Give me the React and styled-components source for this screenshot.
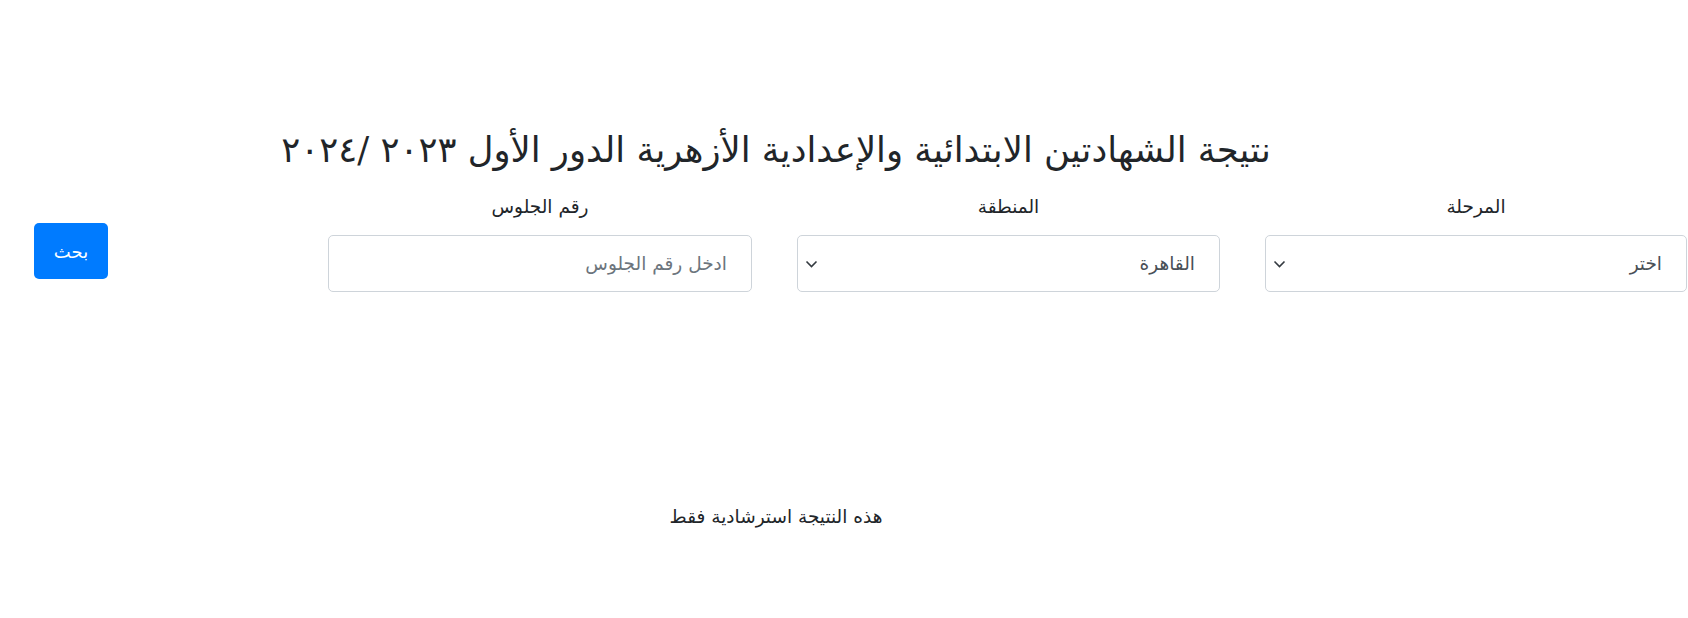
import React from "react";
import styled, { createGlobalStyle } from "styled-components";

const Global = createGlobalStyle`
  html, body { margin: 0; padding: 0; background: #fff; }
  body {
    direction: rtl;
    font-family: "DejaVu Sans", "Noto Sans", sans-serif;
    color: #212529;
    overflow: hidden;
  }
`;

const Page = styled.div`
  width: 1688px;
  height: 618px;
  display: flex;
  flex-direction: column;
`;

const Heading = styled.h1`
  margin: 0;
  padding: 120px 136px 0 0;
  font-family: "DejaVu Serif", "DejaVu Sans", serif;
  font-weight: 400;
  font-size: 35.4px;
  line-height: 60px;
  text-align: center;
`;

const FormRow = styled.div`
  display: flex;
  align-items: flex-start;
  gap: 45px;
  padding-right: 1px;
  margin-top: 12px;
`;

const Field = styled.div`
  width: ${(p) => p.$w}px;
  display: flex;
  flex-direction: column;
  align-items: stretch;
`;

const Label = styled.label`
  text-align: center;
  font-size: 18.5px;
  line-height: 30px;
  margin-bottom: 13px;
`;

const Box = styled.div`
  position: relative;
  height: 57px;
  box-sizing: border-box;
  border: 1px solid #ced4da;
  border-radius: 5px;
  background: #fff;
  display: flex;
  align-items: center;
  padding: 0 24px;
  font-size: 18.5px;
  color: ${(p) => (p.$placeholder ? "#6c757d" : "#495057")};
`;

const Chevron = styled.svg`
  position: absolute;
  left: 7px;
  top: 50%;
  margin-top: -4px;
  width: 13px;
  height: 8px;
`;

const SearchButton = styled.button`
  margin-right: 175px;
  margin-top: 31px;
  width: 74px;
  height: 56px;
  border: none;
  border-radius: 5px;
  background: #007bff;
  color: #fff;
  font-family: "DejaVu Sans", sans-serif;
  font-size: 18px;
  padding: 0;
`;

const Note = styled.p`
  margin: 210px 0 0 0;
  padding-right: 136px;
  text-align: center;
  font-size: 18.5px;
  line-height: 30px;
`;

const SelectBox = ({ children }) => (
  <Box>
    {children}
    <Chevron viewBox="0 0 13 8">
      <path d="M1.5 1.5 L6.5 6.5 L11.5 1.5" fill="none" stroke="#343a40" strokeWidth="1.6" />
    </Chevron>
  </Box>
);

export default function App() {
  return (
    <>
      <Global />
      <Page>
        <Heading>نتيجة الشهادتين الابتدائية والإعدادية الأزهرية الدور الأول ٢٠٢٣ /٢٠٢٤</Heading>
        <FormRow>
          <Field $w={422}>
            <Label>المرحلة</Label>
            <SelectBox>اختر</SelectBox>
          </Field>
          <Field $w={423}>
            <Label>المنطقة</Label>
            <SelectBox>القاهرة</SelectBox>
          </Field>
          <Field $w={424}>
            <Label>رقم الجلوس</Label>
            <Box $placeholder>ادخل رقم الجلوس</Box>
          </Field>
          <SearchButton>بحث</SearchButton>
        </FormRow>
        <Note>هذه النتيجة استرشادية فقط</Note>
      </Page>
    </>
  );
}
